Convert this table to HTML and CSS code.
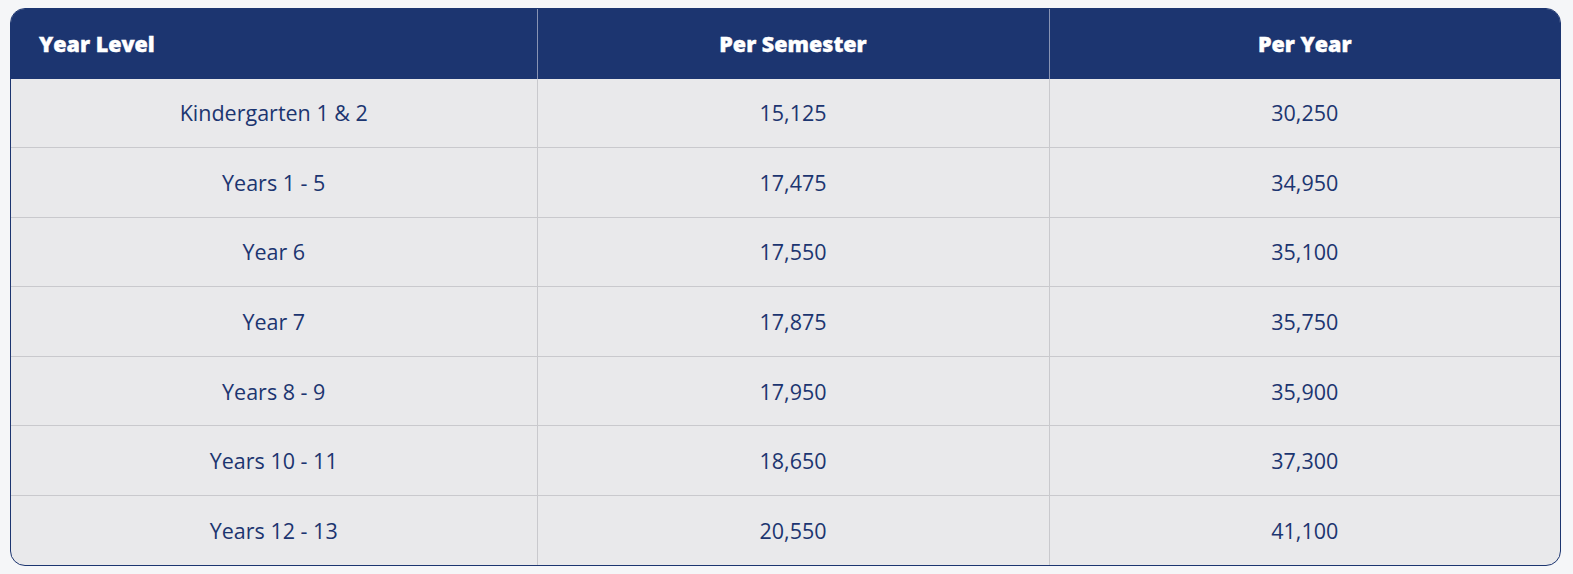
FILE: index.html
```html
<!DOCTYPE html>
<html>
<head>
<meta charset="utf-8">
<link rel="stylesheet" href="styles.css">
</head>
<body>
<div class="wrap">
<table class="fees">
<colgroup><col class="c1"><col class="c2"><col class="c3"></colgroup>
<thead>
<tr><th class="left">Year Level</th><th>Per Semester</th><th>Per Year</th></tr>
</thead>
<tbody>
<tr><td>Kindergarten 1 &amp; 2</td><td>15,125</td><td>30,250</td></tr>
<tr><td>Years 1 - 5</td><td>17,475</td><td>34,950</td></tr>
<tr><td>Year 6</td><td>17,550</td><td>35,100</td></tr>
<tr><td>Year 7</td><td>17,875</td><td>35,750</td></tr>
<tr><td>Years 8 - 9</td><td>17,950</td><td>35,900</td></tr>
<tr><td>Years 10 - 11</td><td>18,650</td><td>37,300</td></tr>
<tr><td>Years 12 - 13</td><td>20,550</td><td>41,100</td></tr>
</tbody>
</table>
</div>
</body>
</html>
```
FILE: styles.css
```css
html, body { margin: 0; padding: 0; background: #f5f6f8; }
body { padding: 8px 12px 8px 10px; font-family: "Open Sans", "Noto Sans", sans-serif; }
.wrap {
  border: 1px solid #1c3570;
  border-radius: 15px;
  overflow: hidden;
  background: #e9e9eb;
}
.fees { width: 100%; border-collapse: collapse; table-layout: fixed; }
.c1 { width: 526px; }
.c2 { width: 512px; }
.fees th {
  background: #1c3570;
  color: #ffffff;
  font-weight: 800;
  font-size: 21.5px;
  height: 69.5px;
  padding: 0;
  text-align: center;
  border-left: 1px solid #8893b3;
  -webkit-text-stroke: 0.4px #ffffff;
}
.fees th:first-child { border-left: none; }
.fees th.left { text-align: left; padding-left: 28px; }
.fees td {
  color: #1c3570;
  font-size: 21.5px;
  text-align: center;
  height: 68.6px;
  padding: 0;
  border-top: 1px solid #c9c9cd;
  border-left: 1px solid #c9c9cd;
}
.fees tbody tr:first-child td { border-top: none; }
.fees td:first-child { border-left: none; }
```
